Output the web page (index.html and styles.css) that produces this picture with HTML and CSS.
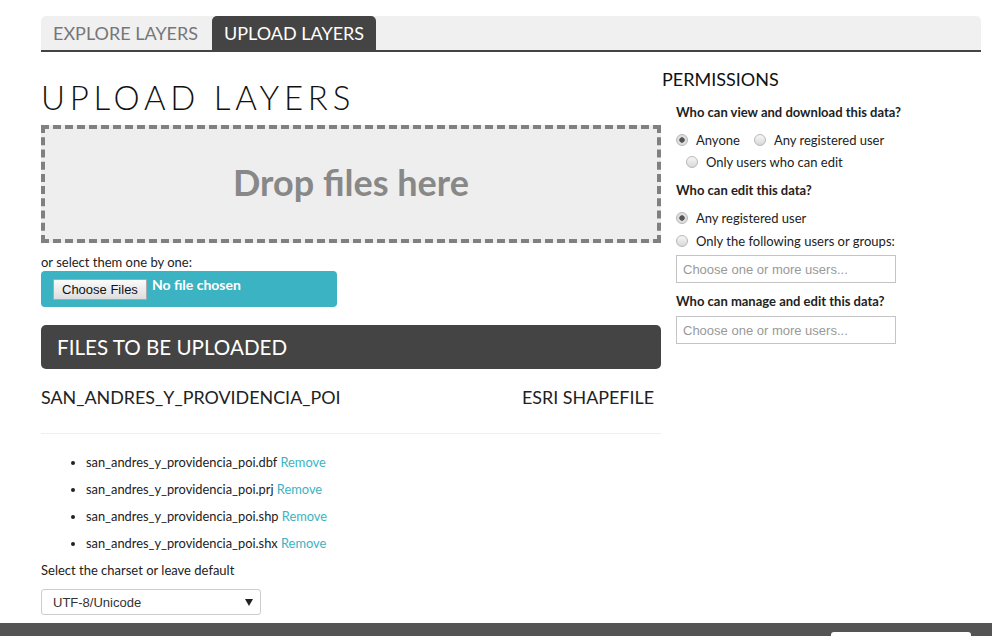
FILE: index.html
```html
<!DOCTYPE html>
<html lang="en">
<head>
<meta charset="utf-8">
<title>Upload Layers</title>
<link rel="stylesheet" href="styles.css">
</head>
<body>
<div class="page">
  <nav class="tabs">
    <a class="tab">Explore Layers</a>
    <a class="tab tab-active">Upload Layers</a>
  </nav>
  <div class="main">
    <section class="upload">
      <h1 class="title">Upload Layers</h1>
      <div class="dropzone">Drop files here</div>
      <p class="hint">or select them one by one:</p>
      <label class="picker"><span class="picker-btn">Choose Files</span><span class="picker-none">No file chosen</span></label>
      <h2 class="files-head">Files to be uploaded</h2>
      <div class="file-row"><span>SAN_ANDRES_Y_PROVIDENCIA_POI</span><span>ESRI SHAPEFILE</span></div>
      <hr class="sep">
      <ul class="file-list">
        <li>san_andres_y_providencia_poi.dbf <a class="remove">Remove</a></li>
        <li>san_andres_y_providencia_poi.prj <a class="remove">Remove</a></li>
        <li>san_andres_y_providencia_poi.shp <a class="remove">Remove</a></li>
        <li>san_andres_y_providencia_poi.shx <a class="remove">Remove</a></li>
      </ul>
      <p class="hint charset-label">Select the charset or leave default</p>
      <div class="select-wrap">
        <select class="charset"><option>UTF-8/Unicode</option></select>
        <svg class="select-arrow" viewBox="0 0 8 7" aria-hidden="true"><path d="M0 0H8L4 7Z" fill="#222"/></svg>
      </div>
    </section>
    <aside class="perms">
      <h2 class="perms-title">Permissions</h2>
      <div class="perm-group">
        <p class="perm-q">Who can view and download this data?</p>
        <div class="radios">
          <div class="radio-line">
            <label class="radio"><input type="radio" name="view" checked>Anyone</label>
            <label class="radio"><input type="radio" name="view">Any registered user</label>
          </div>
          <div class="radio-line radio-indent">
            <label class="radio"><input type="radio" name="view">Only users who can edit</label>
          </div>
        </div>
        <p class="perm-q q-gap">Who can edit this data?</p>
        <div class="radios">
          <div class="radio-line">
            <label class="radio"><input type="radio" name="edit" checked>Any registered user</label>
          </div>
          <div class="radio-line radio-line-2">
            <label class="radio"><input type="radio" name="edit">Only the following users or groups:</label>
          </div>
        </div>
        <input class="users" type="text" placeholder="Choose one or more users...">
        <p class="perm-q q-gap-2">Who can manage and edit this data?</p>
        <input class="users users-2" type="text" placeholder="Choose one or more users...">
      </div>
    </aside>
  </div>
</div>
<footer class="footer"><div class="footer-btn"></div></footer>
</body>
</html>
```

FILE: styles.css
```css
html, body {
  margin: 0;
  background: #fff;
}
body {
  font-family: Lato, "Open Sans", sans-serif;
  color: #333;
}
.page {
  width: 940px;
  padding: 16px 0 0 41px;
}

/* Tabs */
.tabs {
  display: flex;
  height: 34px;
  background: #f0f0f0;
  border-bottom: 2px solid #444;
  border-radius: 5px 5px 0 0;
}
.tab {
  padding: 0 12px;
  line-height: 34px;
  font-size: 18px;
  color: #777;
  text-transform: uppercase;
  text-decoration: none;
}
.tab-active {
  margin-left: 2px;
  padding: 0 12px;
  background: #444;
  color: #fff;
  border-radius: 5px 5px 0 0;
}

/* Layout */
.main {
  display: flex;
}
.upload {
  width: 620px;
}
.perms {
  width: 320px;
  padding-top: 16px;
}

/* Upload column */
.title {
  margin: 25px 0 8px;
  font-size: 33px;
  font-weight: 300;
  line-height: 40px;
  letter-spacing: 4.75px;
  color: #111;
  text-transform: uppercase;
}
.dropzone {
  display: flex;
  align-items: center;
  justify-content: center;
  height: 118px;
  box-sizing: border-box;
  padding-bottom: 4px;
  border: 4px dashed #808080;
  background: #eee;
  font-size: 36px;
  font-weight: 700;
  color: #888;
}
.hint {
  margin: 10px 0 0;
  font-size: 13px;
  line-height: 18px;
  color: #222;
}
.picker {
  display: flex;
  align-items: flex-start;
  width: 296px;
  height: 36px;
  box-sizing: border-box;
  padding: 8px 12px;
  background: #3bb3c3;
  border-radius: 4px;
}
.picker-btn {
  padding: 0 8px;
  font-family: Arial, "Liberation Sans", sans-serif;
  font-size: 13px;
  line-height: 19px;
  color: #111;
  border: 1px solid #a9a9a9;
  background: linear-gradient(#fbfbfb, #dddddd);
}
.picker-none {
  margin: -1px 0 0 5px;
  font-size: 14px;
  font-weight: 700;
  line-height: 14px;
  color: #fff;
}
.files-head {
  margin: 18px 0 0;
  height: 44px;
  padding-left: 16px;
  line-height: 44px;
  font-size: 20.6px;
  font-weight: 400;
  color: #fff;
  background: #444;
  border-radius: 5px;
  text-transform: uppercase;
}
.file-row {
  display: flex;
  justify-content: space-between;
  margin-top: 17px;
  padding-right: 7px;
  font-size: 17.9px;
  line-height: 22px;
  color: #222;
}
.sep {
  height: 0;
  margin: 25px 0 0;
  border: 0;
  border-top: 1px solid #eee;
}
.file-list {
  margin: 19px 0 0;
  padding-left: 45px;
  font-size: 12.85px;
  line-height: 18px;
  color: #222;
}
.file-list li {
  margin-bottom: 9px;
}
.remove {
  color: #3bb3c3;
}
.charset-label {
  margin-top: 0;
  font-size: 13px;
}
.select-wrap {
  position: relative;
  width: 220px;
  margin-top: 10px;
}
.charset {
  display: block;
  appearance: none;
  -webkit-appearance: none;
  width: 220px;
  height: 26px;
  margin: 0;
  padding: 0 0 0 11px;
  border: 1px solid #ccc;
  border-radius: 3px;
  background: #fff;
  font-family: Arial, "Liberation Sans", sans-serif;
  font-size: 13px;
  color: #333;
}
.select-arrow {
  position: absolute;
  right: 8px;
  top: 10px;
  width: 8px;
  height: 7px;
  pointer-events: none;
}

/* Permissions column */
.perms-title {
  margin: 0 0 13px 1px;
  font-size: 18px;
  font-weight: 400;
  line-height: 22px;
  color: #111;
  text-transform: uppercase;
}
.perm-group {
  padding-left: 15px;
}
.perm-q {
  margin: 0;
  font-size: 13px;
  font-weight: 700;
  line-height: 18px;
  color: #222;
}
.q-gap {
  margin-top: 8px;
}
.q-gap-2 {
  margin-top: 9px;
}
.radios {
  margin-top: 8px;
}
.radio-line {
  display: flex;
  align-items: center;
  height: 22px;
  font-size: 13px;
  color: #222;
}
.radio-indent {
  padding-left: 10px;
}
.radio-line-2 {
  margin-top: 1px;
}
.radio {
  display: flex;
  align-items: center;
  gap: 8px;
  margin-right: 14px;
}
.radio input {
  appearance: none;
  -webkit-appearance: none;
  width: 12px;
  height: 12px;
  margin: 0;
  border: 1px solid #b8b8b8;
  border-radius: 50%;
  background: linear-gradient(#f6f6f6, #d9d9d9);
}
.radio input:checked {
  background: radial-gradient(circle, #555 0 2.4px, #dedede 3px);
}
.users {
  display: block;
  width: 220px;
  height: 28px;
  box-sizing: border-box;
  margin: 3px 0 0;
  padding: 0 6px;
  border: 1px solid #c4c4c4;
  border-radius: 0;
  font-family: Arial, "Liberation Sans", sans-serif;
  font-size: 13px;
  color: #333;
}
.users::placeholder {
  color: #999;
}
.users-2 {
  margin-top: 6px;
}

/* Footer */
.footer {
  display: flex;
  justify-content: flex-end;
  height: 13px;
  box-sizing: border-box;
  margin-top: 8px;
  padding: 9px 21px 0 0;
  overflow: hidden;
  background: #545454;
}
.footer-btn {
  width: 140px;
  height: 30px;
  flex: none;
  background: #fff;
  border-radius: 3px 3px 0 0;
}
```
